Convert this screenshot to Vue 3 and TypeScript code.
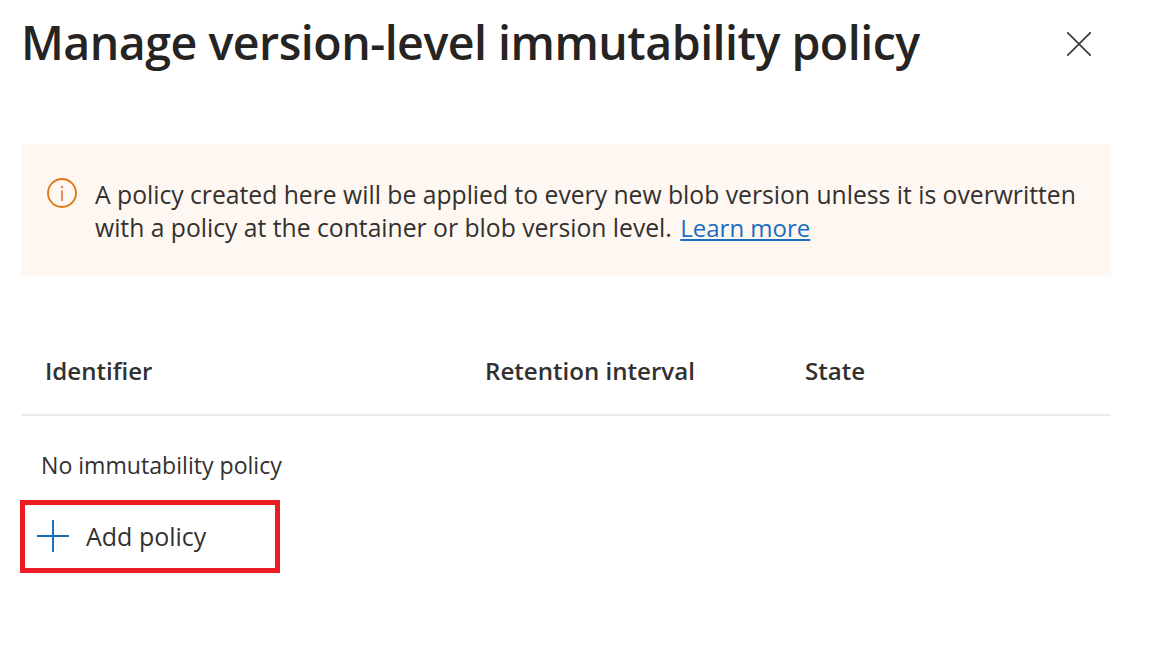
<script setup lang="ts">
const columns: { label: string; width: number }[] = [
  { label: 'Identifier', width: 440 },
  { label: 'Retention interval', width: 320 },
  { label: 'State', width: 200 },
]
</script>

<template>
  <div class="panel">
    <header class="head">
      <h1 class="title">Manage version-level immutability policy</h1>
      <button class="close" aria-label="Close">
        <svg width="24" height="24" viewBox="0 0 24 24"><path d="M0.8 0.8 L23.2 23.2 M23.2 0.8 L0.8 23.2" stroke="#3b3a39" stroke-width="1.7" stroke-linecap="round" fill="none" /></svg>
      </button>
    </header>
    <div class="notice">
      <svg class="info" width="30" height="30" viewBox="0 0 30 30">
        <circle cx="15" cy="15" r="14" fill="none" stroke="#e07b18" stroke-width="1.9" />
        <path d="M15 12.5 V23" stroke="#d9683a" stroke-width="1.5" fill="none" />
        <circle cx="15" cy="9" r="1.1" fill="#d9683a" />
      </svg>
      <p class="notice-text">A policy created here will be applied to every new blob version unless it is overwritten with a policy at the container or blob version level. <a href="#" class="link">Learn more</a></p>
    </div>
    <div class="table-head">
      <div v-for="c in columns" :key="c.label" class="th" :style="{ width: c.width + 'px' }">{{ c.label }}</div>
    </div>
    <p class="empty">No immutability policy</p>
    <button class="add">
      <svg width="32" height="32" viewBox="0 0 32 32"><path d="M16 0 V32 M0 16 H32" stroke="#0f6cbd" stroke-width="1.9" fill="none" /></svg>
      <span>Add policy</span>
    </button>
  </div>
</template>

<style>
body { margin: 0; background: #fff; }
</style>

<style scoped>
.panel { width: 1151px; height: 648px; box-sizing: border-box; padding: 0 40px 0 21px; font-family: "Open Sans", "Noto Sans", sans-serif; color: #323130; overflow: hidden; }
.head { display: flex; justify-content: space-between; align-items: center; height: 88px; }
.title { margin: 0 0 4px; font-size: 46.5px; line-height: 84px; font-weight: 600; letter-spacing: -0.5px; color: #252423; white-space: nowrap; }
.close { border: 0; background: none; padding: 0; margin-right: 20px; display: flex; }
.notice { margin-top: 56px; height: 132px; box-sizing: border-box; background: #fff7f1; display: flex; align-items: flex-start; gap: 18px; padding: 34px 24px 0 26px; }
.info { flex: none; }
.notice-text { margin: 0; font-size: 24.7px; line-height: 33px; }
.link { color: #1b6ec2; font-size: 24px; margin-left: 2px; }
.table-head { margin-top: 50px; height: 88px; display: flex; align-items: center; padding-left: 24px; border-bottom: 2px solid #edebe9; }
.th { font-size: 24.1px; font-weight: 600; }
.empty { margin: 32px 0 0 20px; font-size: 23.1px; line-height: 34px; }
.add { margin: 18px 0 0 -1px; width: 260px; height: 73px; box-sizing: border-box; border: 5px solid #ed1c24; background: none; display: flex; align-items: center; gap: 17px; padding: 0 0 1px 12px; font: inherit; font-size: 25px; color: #323130; }
</style>
